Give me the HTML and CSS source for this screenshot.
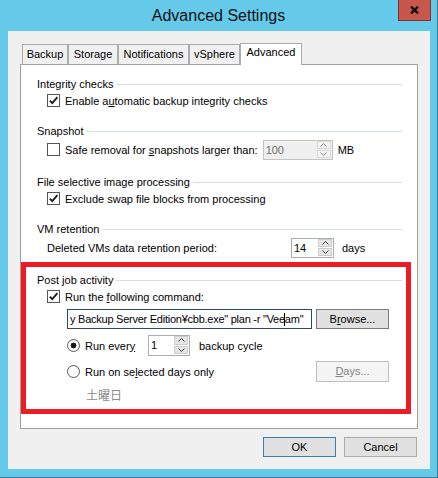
FILE: index.html
```html
<!DOCTYPE html>
<html lang="en">
<head>
    <meta charset="UTF-8">
    <title>Advanced Settings</title>
    <link rel="stylesheet" href="styles.css">
</head>
<body>

<div class="window">
    <div class="titlebar">
        <div class="title">Advanced Settings</div>
        <div class="close">
            <svg width="9" height="8" viewBox="0 0 9 8"><path d="M1 0.6 L8 7.4 M8 0.6 L1 7.4" stroke="#111" stroke-width="2.3"/></svg>
        </div>
    </div>

    <div class="client">
        <div class="tabs">
            <div class="tab">Backup</div>
            <div class="tab">Storage</div>
            <div class="tab">Notifications</div>
            <div class="tab">vSphere</div>
            <div class="tab active">Advanced</div>
        </div>

        <div class="panel">
            <div class="group">
                <div class="group-title">Integrity checks</div>
                <div class="row indent">
                    <span class="check"><svg width="11" height="11" viewBox="0 0 11 11"><path d="M1.8 5.6 L4.3 8.2 L9.4 2.2" fill="none" stroke="#1a1a1a" stroke-width="1.8"/></svg></span>
                    <span>Enable a<u>u</u>tomatic backup integrity checks</span>
                </div>
            </div>

            <div class="group">
                <div class="group-title">Snapshot</div>
                <div class="row indent tall">
                    <span class="check"></span>
                    <span>Safe removal for <u>s</u>napshots larger than:</span>
                    <div class="spin disabled w100">
                        <span class="spin-val">100</span>
                        <div class="spin-btns">
                            <span class="spin-btn"><svg width="7" height="4" viewBox="0 0 7 4"><path d="M0.5 3.5 L3.5 0.5 L6.5 3.5" fill="none" stroke="#8a8a8a" stroke-width="1"/></svg></span>
                            <span class="spin-btn"><svg width="7" height="4" viewBox="0 0 7 4"><path d="M0.5 0.5 L3.5 3.5 L6.5 0.5" fill="none" stroke="#8a8a8a" stroke-width="1"/></svg></span>
                        </div>
                    </div>
                    <span class="unit mb">MB</span>
                </div>
            </div>

            <div class="group">
                <div class="group-title">File selective image processing</div>
                <div class="row indent">
                    <span class="check"><svg width="11" height="11" viewBox="0 0 11 11"><path d="M1.8 5.6 L4.3 8.2 L9.4 2.2" fill="none" stroke="#1a1a1a" stroke-width="1.8"/></svg></span>
                    <span>Exclude swap file blocks from processing</span>
                </div>
            </div>

            <div class="group">
                <div class="group-title">VM retention</div>
                <div class="row indent tall">
                    <span class="retention-label">Deleted VMs data retention period:</span>
                    <div class="spin w14">
                        <span class="spin-val">14</span>
                        <div class="spin-btns">
                            <span class="spin-btn"><svg width="7" height="4" viewBox="0 0 7 4"><path d="M0.5 3.5 L3.5 0.5 L6.5 3.5" fill="none" stroke="#333" stroke-width="1"/></svg></span>
                            <span class="spin-btn"><svg width="7" height="4" viewBox="0 0 7 4"><path d="M0.5 0.5 L3.5 3.5 L6.5 0.5" fill="none" stroke="#333" stroke-width="1"/></svg></span>
                        </div>
                    </div>
                    <span class="unit">days</span>
                </div>
            </div>

            <div class="group">
                <div class="group-title">Post job activity</div>
                <div class="row indent">
                    <span class="check"><svg width="11" height="11" viewBox="0 0 11 11"><path d="M1.8 5.6 L4.3 8.2 L9.4 2.2" fill="none" stroke="#1a1a1a" stroke-width="1.8"/></svg></span>
                    <span>Run the <u>f</u>ollowing command:</span>
                </div>

                <div class="sub">
                    <div class="cmd-row">
                        <div class="textbox">y Backup Server Edition¥cbb.exe" plan -r "Vee<span class="caret"></span>am"</div>
                        <div class="btn browse">B<u>r</u>owse...</div>
                    </div>

                    <div class="radio-row every">
                        <span class="radio on"></span>
                        <span class="radio-label">Run ever<u>y</u></span>
                        <div class="spin w1">
                            <span class="spin-val">1</span>
                            <div class="spin-btns">
                                <span class="spin-btn"><svg width="7" height="4" viewBox="0 0 7 4"><path d="M0.5 3.5 L3.5 0.5 L6.5 3.5" fill="none" stroke="#333" stroke-width="1"/></svg></span>
                                <span class="spin-btn"><svg width="7" height="4" viewBox="0 0 7 4"><path d="M0.5 0.5 L3.5 3.5 L6.5 0.5" fill="none" stroke="#333" stroke-width="1"/></svg></span>
                            </div>
                        </div>
                        <span class="unit cycle">backup cycle</span>
                    </div>

                    <div class="radio-row">
                        <span class="radio"></span>
                        <span>Run on se<u>l</u>ected days only</span>
                        <div class="btn disabled days"><u>D</u>ays...</div>
                    </div>

                    <div class="weekday">土曜日</div>
                </div>
            </div>
        </div>

        <div class="footer">
            <div class="btn default">OK</div>
            <div class="btn">Cancel</div>
        </div>
    </div>

    <!-- 赤い枠（注釈） -->
    <div class="highlight"></div>
</div>

</body>
</html>
```

FILE: styles.css
```css
/*初期化*/
*{
    box-sizing: border-box;
}
body{
    margin: 0;
    font-family: "Liberation Sans", "Noto Sans CJK JP", sans-serif;
    font-size: 11px;
    color: #000;
}
u{
    text-underline-offset: 1px;
}

/*1.ウィンドウ枠*/
.window{
    position: relative;
    width: 438px;
    height: 478px;
    background-color: #65c9ea;
    border-right: 1px solid #3f7893;
    border-bottom: 1px solid #3f7893;
    display: flex;
    flex-direction: column;
}

/*2.タイトルバー*/
.titlebar{
    height: 31px;
    display: grid;
    grid-template-columns: 1fr auto 1fr;
    align-items: start;
}
.title{
    grid-column: 2;
    padding-top: 7px;
    font-size: 16px;
    line-height: 18px;
    color: #111;
}
.close{
    justify-self: end;
    width: 33px;
    height: 21px;
    margin-right: 6px;
    background-color: #c7564c;
    border: 1px solid #80342d;
    border-top: none;
    display: flex;
    align-items: center;
    justify-content: center;
}

/*3.クライアント領域*/
.client{
    height: 438px;
    margin: 0 7px 0 8px;
    padding: 12px 12px 0 12px;
    background-color: #f0f0f0;
    display: flex;
    flex-direction: column;
}

/*4.タブ*/
.tabs{
    height: 21px;
    margin-left: 2px;
    display: flex;
    align-items: flex-end;
}
.tab{
    height: 20px;
    line-height: 19px;
    text-align: center;
    background-color: #f0f0f0;
    border: 1px solid #acacac;
    border-bottom: none;
}
.tab:nth-child(1){ width: 46px; }
.tab:nth-child(2){ width: 50px; }
.tab:nth-child(3){ width: 71px; }
.tab:nth-child(4){ width: 51px; }
.tab.active{
    width: 62px;
    height: 22px;
    line-height: 17px;
    margin-bottom: -1px;
    background-color: #fff;
    position: relative;
    z-index: 1;
}

/*5.タブの中身*/
.panel{
    width: 398px;
    height: 365px;
    padding: 11px 15px 0 16px;
    background-color: #fff;
    border: 1px solid #a0a0a0;
}
.group + .group{
    margin-top: 14px;
}
.group-title{
    height: 16px;
    line-height: 16px;
    display: flex;
    align-items: center;
}
.group-title::after{
    content: "";
    flex: 1;
    height: 1px;
    margin-left: 3px;
    background-color: #d5dfe5;
}

.row{
    height: 17px;
    line-height: 16px;
    display: flex;
    align-items: center;
}
.row.tall{
    height: 21px;
}
.indent{
    margin-left: 10px;
}

/*チェックボックス*/
.check{
    width: 13px;
    height: 13px;
    margin-right: 5px;
    border: 1px solid #555;
    background-color: #fff;
    display: flex;
    align-items: center;
    justify-content: center;
    flex-shrink: 0;
}

/*ラジオボタン*/
.radio{
    width: 13px;
    height: 13px;
    margin-right: 5px;
    border: 1px solid #555;
    border-radius: 50%;
    background-color: #fff;
    flex-shrink: 0;
}
.radio.on{
    background: radial-gradient(circle, #1a1a1a 0 2.6px, #fff 3.2px);
}

/*スピンボックス*/
.spin{
    height: 20px;
    border: 1px solid #abadb3;
    background-color: #fff;
    display: flex;
    margin-left: 5px;
}
.spin-val{
    flex: 1;
    padding-left: 2px;
    line-height: 18px;
}
.spin-btns{
    width: 15px;
    padding: 0 1px 1px 0;
    display: flex;
    flex-direction: column;
    gap: 1px;
}
.spin-btn{
    flex: 1;
    background-color: #e6e6e6;
    border: 1px solid #cdcdcd;
    display: flex;
    align-items: center;
    justify-content: center;
}
.spin.disabled{
    background-color: #f0f0f0;
    border-color: #c2c2c2;
    color: #6d6d6d;
}
.spin.disabled .spin-btn{
    background-color: #f4f4f4;
    border-color: #dadada;
}
.w100{ width: 70px; }
.w14{ width: 43px; margin-left: 0; }
.w1{ width: 42px; height: 21px; margin-left: 0; }

.unit{
    margin-left: 8px;
}
.unit.mb{
    margin-left: 5px;
}
.unit.cycle{
    margin-left: 9px;
}
.retention-label{
    width: 244px;
}

/*6.ポストジョブ*/
.sub{
    width: 322px;
    margin-left: 30px;
}
.cmd-row{
    height: 20px;
    margin-top: 4px;
    display: flex;
}
.textbox{
    width: 245px;
    height: 20px;
    padding-left: 2px;
    line-height: 18px;
    letter-spacing: -0.25px;
    white-space: nowrap;
    overflow: hidden;
    border: 1px solid #2e4a6b;
    background-color: #fff;
}
.caret{
    display: inline-block;
    width: 1px;
    height: 13px;
    margin: 0 -0.5px;
    vertical-align: -3px;
    background-color: #000;
}
.radio-row{
    height: 21px;
    margin-top: 5px;
    display: flex;
    align-items: center;
}
.radio-row.every{
    margin-top: 6px;
}
.radio-label{
    width: 63px;
}
.weekday{
    height: 16px;
    line-height: 16px;
    margin-top: 6px;
    margin-left: 19px;
    color: #8c8c8c;
    font-size: 12px;
}

/*7.ボタン*/
.btn{
    width: 73px;
    height: 20px;
    line-height: 18px;
    text-align: center;
    background-color: #e1e1e1;
    border: 1px solid #adadad;
}
.browse{
    margin-left: 4px;
    border-color: #7a7a7a;
}
.days{
    margin-left: auto;
    height: 21px;
    line-height: 19px;
}
.btn.disabled{
    background-color: #f4f4f4;
    border-color: #bfbfbf;
    color: #838383;
}
.btn.default{
    border-color: #3c7fb1;
}
.footer{
    margin-top: 8px;
    padding-right: 1px;
    display: flex;
    justify-content: flex-end;
    gap: 8px;
}

/*8.赤い枠（スクリーンショット上の注釈）*/
.highlight{
    position: absolute;
    left: 21px;
    top: 262px;
    width: 390px;
    height: 152px;
    border: 5px solid #ed1c24;
}
```
